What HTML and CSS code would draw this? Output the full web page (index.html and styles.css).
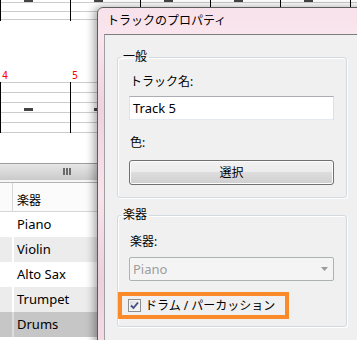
FILE: index.html
```html
<!DOCTYPE html>
<html lang="ja">

<head>
    <meta charset="UTF-8">
    <meta name="viewport" content="width=device-width, initial-scale=1.0">
    <title>トラックのプロパティ</title>
    <link rel="stylesheet" href="styles.css">
</head>

<body>

<div class="app">

    <!-- score behind the dialog -->
    <svg class="score" width="357" height="163" viewBox="0 0 357 163">
        <g stroke="#cccccc" stroke-width="1">
            <line x1="0" y1="2.5" x2="357" y2="2.5" />
            <line x1="0" y1="11.5" x2="357" y2="11.5" />
            <line x1="0" y1="19.5" x2="357" y2="19.5" />
            <line x1="0" y1="82.5" x2="357" y2="82.5" />
            <line x1="0" y1="92.5" x2="357" y2="92.5" />
            <line x1="0" y1="102.5" x2="357" y2="102.5" />
            <line x1="0" y1="112.5" x2="357" y2="112.5" />
            <line x1="0" y1="122.5" x2="357" y2="122.5" />
            <line x1="0" y1="132.5" x2="357" y2="132.5" />
        </g>
        <g stroke="#000" stroke-width="1">
            <line x1="0.5" y1="0" x2="0.5" y2="21" />
            <line x1="70.5" y1="0" x2="70.5" y2="21" />
            <line x1="140.5" y1="0" x2="140.5" y2="21" />
            <line x1="210.5" y1="0" x2="210.5" y2="21" />
            <line x1="280.5" y1="0" x2="280.5" y2="21" />
            <line x1="350.5" y1="0" x2="350.5" y2="21" />
            <line x1="0.5" y1="82" x2="0.5" y2="133" />
            <line x1="70.5" y1="82" x2="70.5" y2="133" />
            <line x1="140.5" y1="82" x2="140.5" y2="133" />
        </g>
        <g fill="#444">
            <rect x="24" y="0" width="9" height="2" />
            <rect x="94" y="0" width="9" height="2" />
            <rect x="164" y="0" width="9" height="2" />
            <rect x="234" y="0" width="9" height="2" />
            <rect x="304" y="0" width="9" height="2" />
            <rect x="24" y="108" width="9" height="3" />
            <rect x="94" y="108" width="9" height="3" />
        </g>
        <text class="bar-no" x="2" y="79">4</text>
        <text class="bar-no" x="72" y="79">5</text>
    </svg>

    <div class="hscroll">
        <svg class="grip" width="9" height="7" viewBox="0 0 9 7">
            <rect x="0" y="0" width="2" height="7" fill="#6a6a6a" />
            <rect x="3" y="0" width="2" height="7" fill="#6a6a6a" />
            <rect x="6" y="0" width="2" height="7" fill="#6a6a6a" />
        </svg>
    </div>

    <div class="grid">
        <div class="grid-row grid-head"><span class="cell-no"></span><span class="cell-name">楽器</span></div>
        <div class="grid-row"><span class="cell-no"></span><span class="cell-name">Piano</span></div>
        <div class="grid-row alt"><span class="cell-no"></span><span class="cell-name">Violin</span></div>
        <div class="grid-row"><span class="cell-no"></span><span class="cell-name">Alto Sax</span></div>
        <div class="grid-row alt"><span class="cell-no"></span><span class="cell-name">Trumpet</span></div>
        <div class="grid-row selected"><span class="cell-no"></span><span class="cell-name">Drums</span></div>
    </div>

    <!-- Dialog window -->
    <div class="dialog">
        <div class="dialog-title">トラックのプロパティ</div>
        <div class="dialog-client">

            <fieldset class="group">
                <legend>一般</legend>
                <div class="label">トラック名:</div>
                <div class="textbox">Track 5</div>
                <div class="label label-color">色:</div>
                <div class="button">選択</div>
            </fieldset>

            <fieldset class="group group-instrument">
                <legend>楽器</legend>
                <div class="label">楽器:</div>
                <div class="combo">
                    <span>Piano</span>
                    <svg width="7" height="4" viewBox="0 0 7 4"><path d="M0 0 H7 L3.5 4 Z" fill="#9a9a9a" /></svg>
                </div>
                <div class="highlight">
                    <span class="check">
                        <svg width="9" height="9" viewBox="0 0 9 9"><path d="M1 4.5 L3.5 7 L8 1.5" fill="none" stroke="#3d4f86" stroke-width="1.8" /></svg>
                    </span>
                    <span class="check-text">ドラム / パーカッション</span>
                </div>
            </fieldset>

        </div>
    </div>

</div>

</body>

</html>
```

FILE: styles.css
```css
body {
    margin: 0;
    font-family: "Noto Sans", "Noto Sans CJK JP", sans-serif;
    background-color: #fff;
}

.app {
    position: relative;
    width: 357px;
    height: 340px;
    overflow: hidden;
    background-color: #fff;
}

.score {
    display: block;
}

.bar-no {
    fill: #ff0000;
    font-family: "DejaVu Sans Mono", monospace;
    font-size: 10px;
}

.hscroll {
    box-sizing: border-box;
    height: 20px;
    border-top: 1px solid #9c9c9c;
    border-bottom: 1px solid #b4b4b4;
    background: linear-gradient(#e6e6e6, #cacaca) 0 0 / 100% 16px no-repeat, #f6f6f6;
    padding: 4px 0 0 63px;
}

.grip {
    display: block;
}

/* instrument list */

.grid {
    font-size: 13px;
    color: #000;
}

.grid-row {
    display: flex;
    height: 25px;
    line-height: 25px;
}

.cell-no {
    width: 12px;
    border-right: 2px solid #fff;
}

.cell-name {
    flex: 1;
    padding-left: 3px;
}

.grid-head {
    box-sizing: border-box;
    height: 29px;
    line-height: 16px;
    font-size: 12px;
    background-color: #fbfbfb;
    border-bottom: 1px solid #d6d6d6;
}

.grid-head .cell-no {
    border-right: 1px solid #d6d6d6;
    margin-right: 1px;
}

.grid-head .cell-name {
    padding-top: 10px;
}

.alt .cell-no,
.alt .cell-name {
    background-color: #ececec;
}

.selected .cell-no,
.selected .cell-name {
    background-color: #c6c6c6;
}

.selected .cell-no {
    border-right-color: #dcdcdc;
}

/* dialog */

.dialog {
    position: absolute;
    left: 97px;
    top: 7px;
    width: 280px;
    height: 340px;
    border: 1px solid #5c5c5c;
    border-radius: 6px 6px 0 0;
    padding: 0 6px;
    background: linear-gradient(180deg, #f7e1ea 0%, #fae6ee 8%, #eed2de 30%, #f8e4ec 55%, #ecd0dc 80%, #f4dde7 100%);
    box-shadow: -3px 0 8px rgba(0, 0, 0, 0.35);
}

.dialog-title {
    height: 26px;
    line-height: 26px;
    padding-left: 3px;
    font-size: 12px;
    color: #000;
}

.dialog-client {
    height: 320px;
    border-top: 1px solid #7c7c7c;
    border-left: 1px solid #a0a0a0;
    background-color: #f0f0f0;
    padding: 14px 0 0 12px;
}

.group {
    box-sizing: border-box;
    width: 230px;
    margin: 0;
    padding: 9px 12px 12px 11px;
    border: 1px solid #d3dadf;
    border-radius: 3px;
    box-shadow: inset 1px 1px 0 #fff, 1px 1px 0 #fff;
}

.group legend {
    margin-left: -8px;
    padding: 0 2px;
    font-size: 12px;
    line-height: 16px;
}

.group-instrument {
    margin-top: 9px;
    padding: 11px 12px 7px 11px;
}

.label {
    font-size: 12px;
    line-height: 16px;
    padding-left: 1px;
}

.textbox {
    box-sizing: border-box;
    height: 24px;
    margin-top: 6px;
    border: 1px solid #abadb3;
    border-color: #abadb3 #dbdfe6 #e3e9ef #e2e3ea;
    background-color: #fff;
    padding-left: 3px;
    font-size: 13px;
    line-height: 22px;
}

.label-color {
    margin-top: 15px;
}

.button {
    box-sizing: border-box;
    height: 25px;
    margin-top: 9px;
    border: 1px solid #707070;
    border-radius: 3px;
    background: linear-gradient(#f2f2f2 0%, #ebebeb 50%, #dddddd 50%, #cfcfcf 100%);
    box-shadow: inset 0 0 0 1px #fcfcfc;
    text-align: center;
    font-size: 12px;
    line-height: 23px;
}

.combo {
    box-sizing: border-box;
    display: flex;
    align-items: center;
    justify-content: space-between;
    height: 24px;
    margin-top: 7px;
    border: 1px solid #adb2b5;
    border-radius: 2px;
    background-color: #f4f4f4;
    padding: 0 5px 0 3px;
    font-size: 13px;
    color: #9d9d9d;
}

.highlight {
    box-sizing: border-box;
    display: flex;
    align-items: center;
    width: 171px;
    height: 27px;
    margin: 11px 0 0 -11px;
    border: 4px solid #fb8a2a;
    padding-left: 6px;
}

.check {
    box-sizing: border-box;
    display: flex;
    align-items: center;
    justify-content: center;
    width: 13px;
    height: 13px;
    border: 1px solid #8e8f8f;
    background: linear-gradient(135deg, #dcdcdc, #fbfbfb);
    box-shadow: inset 0 0 0 1px #f4f4f4;
}

.check-text {
    margin-left: 4px;
    font-size: 12px;
    line-height: 16px;
}
```
